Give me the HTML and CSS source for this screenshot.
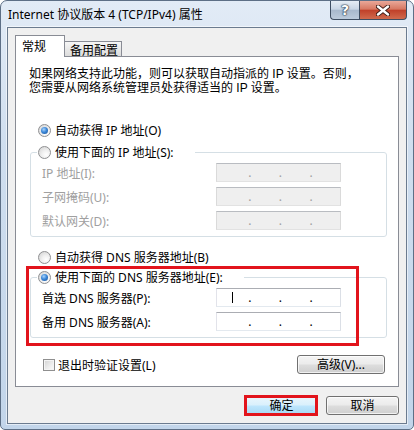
FILE: index.html
```html
<!DOCTYPE html>
<html lang="zh-CN">

<head>
  <meta charset="UTF-8" />
  <title>Internet 协议版本 4 (TCP/IPv4) 属性</title>
  <link rel="stylesheet" href="styles.css">
</head>

<body>
  <div class="window">
    <div class="titlebar">
      <span class="title">Internet 协议版本 4 (TCP/IPv4) 属性</span>
      <div class="caption">
        <span class="cap help">?</span>
        <span class="cap close">
          <svg width="14" height="11" viewBox="0 0 14 11">
            <path d="M2 1.5 L12 9.5 M12 1.5 L2 9.5" stroke="#3a1a14" stroke-width="4.2" stroke-linecap="round" />
            <path d="M2 1.5 L12 9.5 M12 1.5 L2 9.5" stroke="#fff" stroke-width="2.4" stroke-linecap="round" />
          </svg>
        </span>
      </div>
    </div>

    <div class="client">
      <div class="tabs">
        <div class="tab active">常规</div>
        <div class="tab">备用配置</div>
      </div>

      <div class="panel">
        <p class="intro">如果网络支持此功能，则可以获取自动指派的 IP 设置。否则，<br>您需要从网络系统管理员处获得适当的 IP 设置。</p>

        <div class="option auto-ip"><span class="radio checked"></span>自动获得 IP 地址(O)</div>

        <fieldset class="group">
          <legend class="option"><span class="radio"></span>使用下面的 IP 地址(S):</legend>
          <div class="fields disabled">
            <span class="label">IP 地址(I):</span>
            <div class="ipbox"><span class="oct first"></span>.<span class="oct"></span>.<span class="oct"></span>.<span class="oct"></span></div>
            <span class="label">子网掩码(U):</span>
            <div class="ipbox"><span class="oct first"></span>.<span class="oct"></span>.<span class="oct"></span>.<span class="oct"></span></div>
            <span class="label">默认网关(D):</span>
            <div class="ipbox"><span class="oct first"></span>.<span class="oct"></span>.<span class="oct"></span>.<span class="oct"></span></div>
          </div>
        </fieldset>

        <div class="option auto-dns"><span class="radio"></span>自动获得 DNS 服务器地址(B)</div>

        <fieldset class="group dns">
          <legend class="option"><span class="radio checked"></span>使用下面的 DNS 服务器地址(E):</legend>
          <div class="fields">
            <span class="label">首选 DNS 服务器(P):</span>
            <div class="ipbox"><span class="oct first"><i class="caret"></i></span>.<span class="oct"></span>.<span class="oct"></span>.<span class="oct"></span></div>
            <span class="label">备用 DNS 服务器(A):</span>
            <div class="ipbox"><span class="oct first"></span>.<span class="oct"></span>.<span class="oct"></span>.<span class="oct"></span></div>
          </div>
        </fieldset>

        <div class="bottom-row">
          <div class="check-option"><span class="checkbox"></span>退出时验证设置(L)</div>
          <button class="btn advanced">高级(V)...</button>
        </div>
      </div>

      <div class="actions">
        <button class="btn default">确定</button>
        <button class="btn">取消</button>
      </div>
    </div>

    <!-- red annotation boxes drawn over the dialog -->
    <div class="mark mark-dns"></div>
    <div class="mark mark-ok"></div>
  </div>
</body>

</html>
```

FILE: styles.css
```css
body {
  margin: 0;
  font-family: "Noto Sans", "Noto Sans CJK SC", sans-serif;
  font-size: 12px;
  color: #000;
  background: #fff;
}

.window {
  position: relative;
  box-sizing: border-box;
  width: 414px;
  height: 430px;
  display: flex;
  flex-direction: column;
  padding: 0 6px 5px;
  border: 1px solid #5d6f86;
  border-radius: 7px 7px 5px 5px;
  background: linear-gradient(180deg, #e2ebf6 0%, #cfdeef 35%, #c2d5ea 100%);
  overflow: hidden;
}

/* title bar */
.titlebar {
  display: flex;
  height: 26px;
  flex-shrink: 0;
}

.title {
  padding: 7px 0 0 1px;
  line-height: 14px;
  white-space: nowrap;
}

.caption {
  margin-left: auto;
  display: flex;
  align-items: flex-start;
}

.cap {
  box-sizing: border-box;
  height: 19px;
  display: flex;
  align-items: center;
  justify-content: center;
  border: 1px solid #3e4e62;
  border-top: 0;
}

.help {
  width: 29px;
  border-right: 0;
  border-radius: 0 0 0 4px;
  background: linear-gradient(180deg, #e6edf5 0%, #c9d6e5 45%, #a8b9cd 52%, #bccbdc 100%);
  color: #fff;
  font: bold 14px "DejaVu Sans", sans-serif;
  text-shadow: 0 0 1px #1f2d3e, 0 0 1px #1f2d3e, 0 0 2px #1f2d3e;
}

.close {
  width: 48px;
  border-radius: 0 0 4px 0;
  background: linear-gradient(180deg, #eaa899 0%, #d77862 45%, #c0412a 52%, #d06a4d 100%);
}

/* client area */
.client {
  flex: 1;
  display: flex;
  flex-direction: column;
  padding: 7px 7px 8px 7px;
  background: #f0f0f0;
  border: 1px solid #6b7b8f;
  box-shadow: 0 0 0 1px rgba(255, 255, 255, 0.55);
}

.tabs {
  display: flex;
  align-items: flex-end;
  height: 21px;
  flex-shrink: 0;
}

.tab {
  box-sizing: border-box;
  height: 15px;
  width: 57px;
  padding: 2px 0 0 5px;
  line-height: 13px;
  border: 1px solid #898c95;
  border-left: 0;
  border-bottom: 0;
  background: linear-gradient(180deg, #f6f6f6 0%, #e9e9e9 50%, #dcdcdc 100%);
}

.tab.active {
  position: relative;
  z-index: 1;
  height: 22px;
  width: 50px;
  margin-bottom: -1px;
  padding: 4px 0 0 6px;
  line-height: 14px;
  border-left: 1px solid #898c95;
  background: #fff;
}

.panel {
  flex: 1;
  display: flex;
  flex-direction: column;
  padding: 0 11px 0 14px;
  background: #fff;
  border: 1px solid #898c95;
}

.intro {
  margin: 10px 0 0 -1px;
  font-family: "Liberation Sans", "Noto Sans CJK SC", sans-serif;
  line-height: 14px;
  white-space: nowrap;
}

.option {
  display: flex;
  align-items: center;
  gap: 4px;
  line-height: 13px;
  white-space: nowrap;
}

.auto-ip {
  margin-top: 29px;
  padding-left: 8px;
}

.auto-dns {
  margin-top: 14px;
  padding-left: 8px;
}

.radio {
  box-sizing: border-box;
  width: 13px;
  height: 13px;
  flex-shrink: 0;
  display: flex;
  align-items: center;
  justify-content: center;
  border: 1px solid #8f9092;
  border-radius: 50%;
  background: radial-gradient(circle at 65% 70%, #ffffff 0%, #f0f0f0 40%, #cfcfcf 100%);
}

.radio.checked::after {
  content: "";
  width: 7px;
  height: 7px;
  border-radius: 50%;
  background: radial-gradient(circle at 40% 35%, #aad4fb 0%, #3b87d8 45%, #1a4f93 100%);
}

/* group boxes */
.group {
  margin: 9px 0 0;
  padding: 4px 0 6px 11px;
  min-width: 0;
  border: 1px solid #d5dfe5;
  border-radius: 3px;
}

.group.dns {
  margin-top: 7px;
}

.group legend {
  margin-left: -5px;
  padding: 0 21px 0 1px;
}

.fields {
  display: grid;
  grid-template-columns: 174px 125px;
  grid-auto-rows: 19px;
  row-gap: 5px;
  align-items: center;
}

.label {
  white-space: nowrap;
}

.ipbox {
  box-sizing: border-box;
  height: 19px;
  display: flex;
  align-items: center;
  line-height: 17px;
  background: #fff;
  border: 1px solid;
  border-color: #abadb3 #dbdfe6 #e3e9ef #e2e3ea;
}

.oct {
  width: 28px;
  height: 17px;
  display: flex;
  align-items: center;
  justify-content: center;
}

.oct.first {
  width: 32px;
}

.caret {
  width: 1px;
  height: 11px;
  background: #000;
}

.fields.disabled {
  color: #a0a0a0;
}

.fields.disabled .ipbox {
  background: #efefef;
  border-color: #b9bcc1 #dadada #e2e2e2 #dadada;
}

/* bottom of the tab page */
.bottom-row {
  display: flex;
  align-items: center;
  justify-content: space-between;
  height: 19px;
  margin-top: 17px;
  padding-left: 13px;
}

.check-option {
  display: flex;
  align-items: center;
  gap: 3px;
  white-space: nowrap;
}

.checkbox {
  box-sizing: border-box;
  width: 12px;
  height: 12px;
  border: 1px solid #8f8f8f;
  background: linear-gradient(135deg, #d2d2d2 0%, #eeeeee 60%, #fbfbfb 100%);
  box-shadow: inset 0 0 0 1px #f4f4f4;
}

.btn {
  box-sizing: border-box;
  height: 19px;
  padding: 0;
  font: inherit;
  line-height: 17px;
  color: #000;
  border: 1px solid #707070;
  border-radius: 3px;
  background: linear-gradient(180deg, #f4f4f4 0%, #ebebeb 48%, #dddddd 52%, #cfcfcf 100%);
  box-shadow: inset 0 0 0 1px rgba(255, 255, 255, 0.7);
}

.btn.advanced {
  width: 88px;
  margin-right: 2px;
}

.btn.default {
  border-color: #3c7fb1;
  background: linear-gradient(180deg, #eaf6fd 0%, #d9f0fc 48%, #bee6fd 52%, #a7d9f5 100%);
}

.actions {
  display: flex;
  justify-content: flex-end;
  gap: 8px;
  margin-top: 9px;
  flex-shrink: 0;
}

.actions .btn {
  width: 73px;
}

/* red annotation */
.mark {
  position: absolute;
  box-sizing: border-box;
  border: 3px solid #e2141c;
}

.mark-dns {
  left: 25px;
  top: 265px;
  width: 333px;
  height: 80px;
}

.mark-ok {
  left: 243px;
  top: 394px;
  width: 74px;
  height: 21px;
}
```
